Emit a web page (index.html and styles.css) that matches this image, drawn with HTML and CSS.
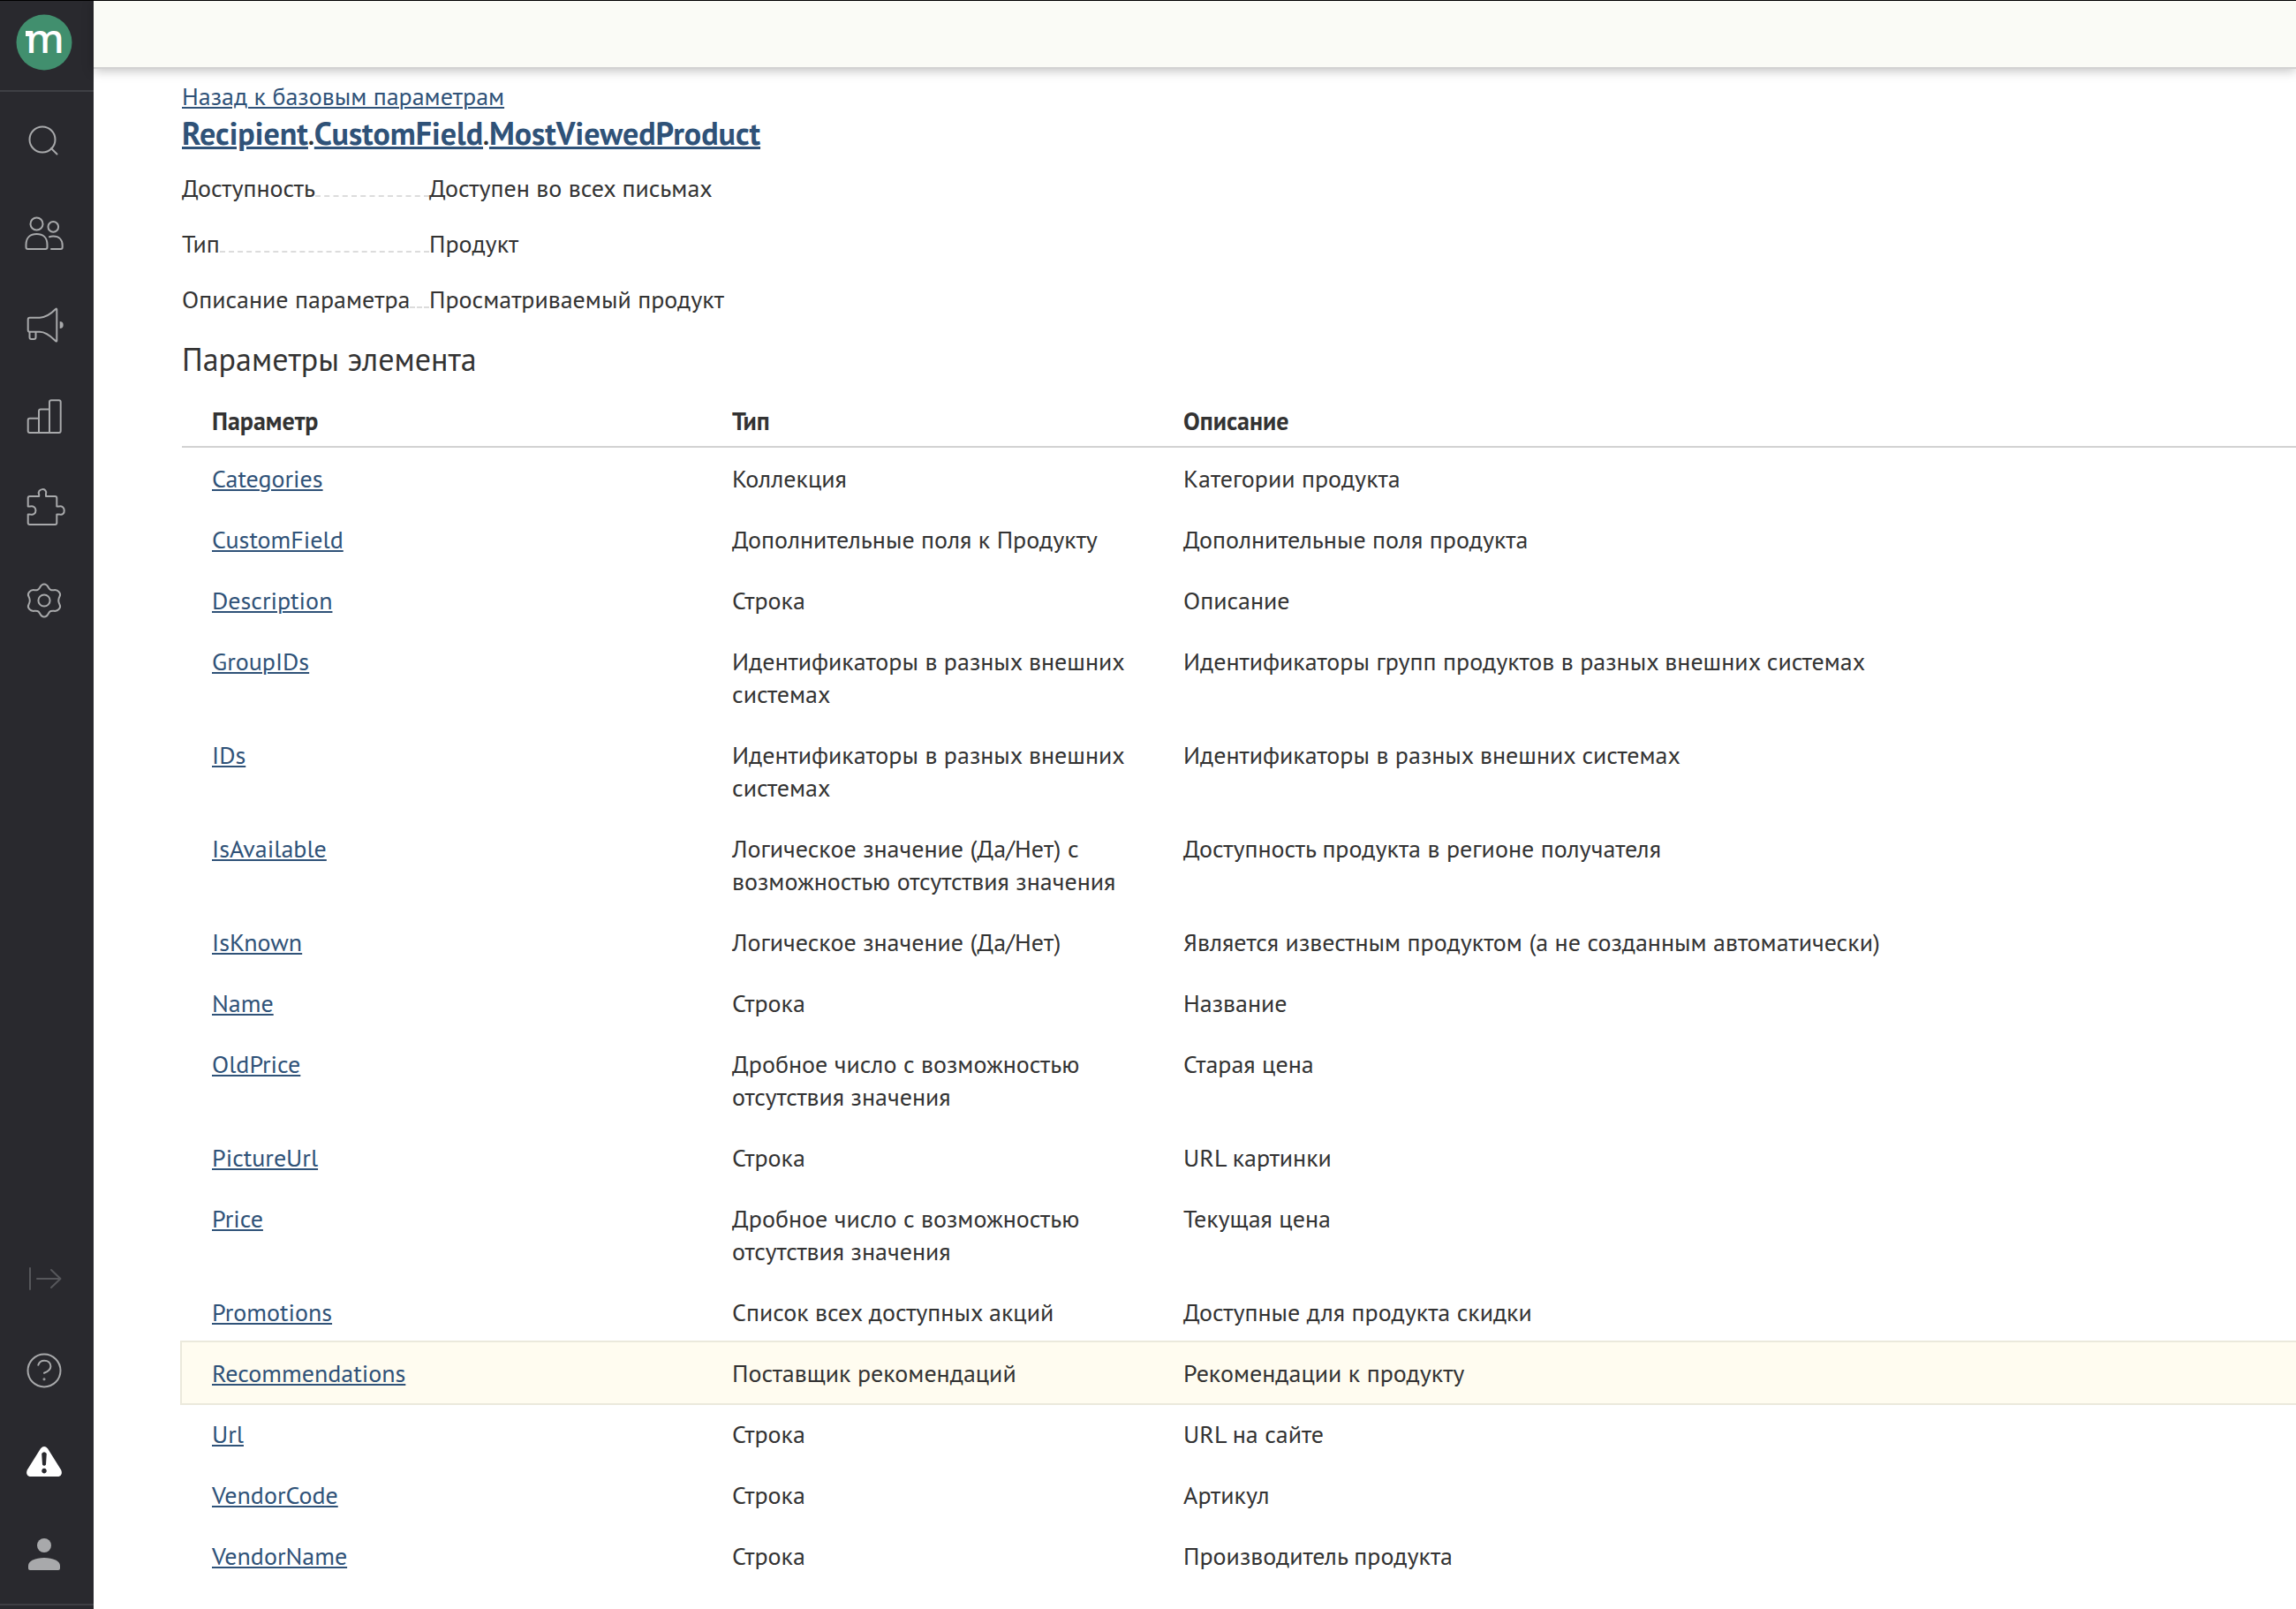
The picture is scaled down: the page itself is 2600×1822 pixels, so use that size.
FILE: index.html
```html
<!DOCTYPE html>
<html lang="ru">
<head>
<meta charset="utf-8">
<meta name="viewport" content="width=device-width, initial-scale=1">
<title>Recipient.CustomField.MostViewedProduct</title>
<link rel="stylesheet" href="styles.css">
</head>
<body>
<div class="app">
  <aside class="sidebar">
    <a class="logo" href="#" aria-label="Главная">
      <svg class="logo-mark" viewBox="0 0 64 64" aria-hidden="true">
        <circle class="logo-disc" cx="32" cy="32" r="31.5"/>
        <rect class="logo-letter" x="11" y="19" width="6" height="6"/>
        <text class="logo-letter logo-text" x="33" y="44" text-anchor="middle">m</text>
      </svg>
    </a>
    <nav class="menu" aria-label="Основное меню">
      <button class="menu-item" type="button" aria-label="Поиск">
        <svg class="icon" viewBox="0 0 48 48"><circle cx="22" cy="22" r="14.5"/><path d="M32 32l6.500 6.500"/></svg>
      </button>
      <button class="menu-item" type="button" aria-label="Клиенты">
        <svg class="icon" viewBox="0 0 48 48"><circle cx="15.500" cy="13.500" r="7"/><circle cx="34.300" cy="16.900" r="5.800"/><path d="M3.500 40v-3c0-8 5-12 12-12s12 4 12 12v3q0 2-2 2h-20q-2 0-2-2z"/><path d="M30 28.200c1-.4 2.600-.6 4.300-.6 6.700 0 10.400 4 10.400 10.400v2q0 2-2 2H32"/></svg>
      </button>
      <button class="menu-item" type="button" aria-label="Кампании">
        <svg class="icon" viewBox="0 0 48 48"><path d="M7.700 15.700H19c8 0 14-5.700 18-9.700q1.300-1 1.300.500v35.200q0 1.500-1.300.500c-4-4-10-10.500-18-10.500H7.700q-2 0-2-2v-12q0-2 2-2z"/><path d="M7.500 32v6q0 2 2 2h3q2 0 2-2v-6"/><path class="solid" d="M41.700 20a4 4 0 0 1 0 8z"/></svg>
      </button>
      <button class="menu-item" type="button" aria-label="Отчёты">
        <svg class="icon" viewBox="0 0 48 48"><path d="M18 25.700H7.700q-2 0-2 2V40q0 2 2 2h33q2 0 2-2V7.300q0-2-2-2H32q-2 0-2 2V42M30 15.500H20q-2 0-2 2V42"/></svg>
      </button>
      <button class="menu-item" type="button" aria-label="Интеграции">
        <svg class="icon" viewBox="0 0 48 48"><path d="M5.700 21.500V12q0-2 2-2h10.500V8c-3-7 10-8.500 7.800-.5V10h10.300q2 0 2 2v9.500h2.200c8-2.500 8.500 11.500.5 8.900h-2.700V40q0 2-2 2H7.700q-2 0-2-2v-9.600h2c9 2.600 9-11.400 0-8.900z"/></svg>
      </button>
      <button class="menu-item" type="button" aria-label="Настройки">
        <svg class="icon" viewBox="0 0 48 48"><circle cx="24" cy="24" r="6.600"/><path d="M24 5.500C27 5.500 28 7.500 29 9.500 30.500 12.300 32 12.300 35 12.200 40 11.500 43.500 16 41.500 19.500 39.500 23 39.500 25 41.500 28.500 43.500 32 40 36.500 35 35.800 32 35.700 30.500 35.700 29 38.500 28 40.500 27 42.500 24 42.500S20 40.500 19 38.500C17.500 35.700 16 35.700 13 35.800 8 36.500 4.500 32 6.500 28.500 8.500 25 8.500 23 6.500 19.500 4.500 16 8 11.500 13 12.200 16 12.300 17.500 12.300 19 9.500 20 7.500 21 5.500 24 5.500z"/></svg>
      </button>
    </nav>
    <div class="menu menu-bottom">
      <button class="menu-item menu-item-dim" type="button" aria-label="Развернуть меню">
        <svg class="icon" viewBox="0 0 48 48"><path d="M8 12v24M16 24h26M32 14l10.500 10L32 34"/></svg>
      </button>
      <button class="menu-item" type="button" aria-label="Помощь">
        <svg class="icon" viewBox="0 0 48 48"><circle cx="24" cy="24" r="18.500"/><path d="M17.300 17.700c1-3.300 3.700-5 6.900-5 4.200 0 7.200 2.700 7.200 6.600 0 4.300-3.400 5.900-7.400 7.500"/><circle class="solid" cx="24" cy="33.800" r=".5"/></svg>
      </button>
      <button class="menu-item menu-item-alert" type="button" aria-label="Предупреждения">
        <svg class="icon icon-filled" viewBox="0 0 48 48"><path fill-rule="evenodd" d="M20 8.200q4-4.400 8 0l15.300 24.500q2.200 5.500-2.800 7.300h-33q-5-1.800-2.800-7.300zM21.200 14l.8 12.500q2 2.600 4 0l.8-12.500q-2.800-3.600-5.600 0zM24 30.800a2.800 2.800 0 1 0 .01 0z"/></svg>
      </button>
      <button class="menu-item" type="button" aria-label="Профиль">
        <svg class="icon icon-filled" viewBox="0 0 48 48"><circle cx="24" cy="14" r="8"/><path d="M6 37c0-5.500 8-9 18-9s18 3.500 18 9v3q0 2-2 2H8q-2 0-2-2z"/></svg>
      </button>
    </div>
  </aside>

  <div class="page">
    <header class="topbar"></header>
    <main class="content">
      <a class="link back" href="#">Назад к базовым параметрам</a>
      <h1 class="title"><a class="link" href="#">Recipient</a><span class="dot">.</span><a class="link" href="#">CustomField</a><span class="dot">.</span><a class="link" href="#">MostViewedProduct</a></h1>
      <dl class="facts">
        <div class="fact"><dt class="fact-name">Доступность</dt><dd class="fact-value">Доступен во всех письмах</dd></div>
        <div class="fact"><dt class="fact-name">Тип</dt><dd class="fact-value">Продукт</dd></div>
        <div class="fact"><dt class="fact-name">Описание параметра</dt><dd class="fact-value">Просматриваемый продукт</dd></div>
      </dl>
      <h2 class="subtitle">Параметры элемента</h2>
      <table class="params">
        <colgroup><col class="col-name"><col class="col-type"><col></colgroup>
        <thead>
          <tr><th scope="col">Параметр</th><th scope="col">Тип</th><th scope="col">Описание</th></tr>
        </thead>
        <tbody>
          <tr><td><a class="link" href="#">Categories</a></td><td>Коллекция</td><td>Категории продукта</td></tr>
          <tr><td><a class="link" href="#">CustomField</a></td><td>Дополнительные поля к Продукту</td><td>Дополнительные поля продукта</td></tr>
          <tr><td><a class="link" href="#">Description</a></td><td>Строка</td><td>Описание</td></tr>
          <tr><td><a class="link" href="#">GroupIDs</a></td><td>Идентификаторы в разных внешних системах</td><td>Идентификаторы групп продуктов в разных внешних системах</td></tr>
          <tr><td><a class="link" href="#">IDs</a></td><td>Идентификаторы в разных внешних системах</td><td>Идентификаторы в разных внешних системах</td></tr>
          <tr><td><a class="link" href="#">IsAvailable</a></td><td>Логическое значение (Да/Нет) с возможностью отсутствия значения</td><td>Доступность продукта в регионе получателя</td></tr>
          <tr><td><a class="link" href="#">IsKnown</a></td><td>Логическое значение (Да/Нет)</td><td>Является известным продуктом (а не созданным автоматически)</td></tr>
          <tr><td><a class="link" href="#">Name</a></td><td>Строка</td><td>Название</td></tr>
          <tr><td><a class="link" href="#">OldPrice</a></td><td>Дробное число с возможностью отсутствия значения</td><td>Старая цена</td></tr>
          <tr><td><a class="link" href="#">PictureUrl</a></td><td>Строка</td><td>URL картинки</td></tr>
          <tr><td><a class="link" href="#">Price</a></td><td>Дробное число с возможностью отсутствия значения</td><td>Текущая цена</td></tr>
          <tr><td><a class="link" href="#">Promotions</a></td><td>Список всех доступных акций</td><td>Доступные для продукта скидки</td></tr>
          <tr class="is-active"><td><a class="link" href="#">Recommendations</a></td><td>Поставщик рекомендаций</td><td>Рекомендации к продукту</td></tr>
          <tr><td><a class="link" href="#">Url</a></td><td>Строка</td><td>URL на сайте</td></tr>
          <tr><td><a class="link" href="#">VendorCode</a></td><td>Строка</td><td>Артикул</td></tr>
          <tr><td><a class="link" href="#">VendorName</a></td><td>Строка</td><td>Производитель продукта</td></tr>
        </tbody>
      </table>
    </main>
  </div>
</div>
</body>
</html>
```
FILE: styles.css
```css
* { box-sizing: border-box; }

body {
  margin: 0;
  background: #fff;
  color: #333;
  font-family: "PT Sans", "Noto Sans", sans-serif;
  font-size: 28px;
  line-height: 37px;
}

.app {
  display: flex;
  min-height: 100vh;
  border-top: 1px solid #000;
}

/* Sidebar */
.sidebar {
  flex: none;
  display: flex;
  flex-direction: column;
  width: 106px;
  padding-bottom: 4px;
  background: #29292e;
}

.logo {
  display: flex;
  justify-content: center;
  height: 103px;
  padding: 15px 6px 0 0;
  border-bottom: 2px solid #3e3f44;
}

.logo-mark { width: 64px; height: 64px; overflow: visible; }
.logo-disc { fill: #418f6e; }
.logo-letter { fill: #fff; }

.logo-text {
  font-family: "Noto Sans", sans-serif;
  font-size: 46px;
  font-weight: 500;
}

.menu {
  display: flex;
  flex-direction: column;
  padding-top: 4px;
}

.menu-bottom {
  margin-top: auto;
  padding-bottom: 4px;
  border-bottom: 2px solid #3e3f44;
}

.menu-item {
  display: flex;
  align-items: center;
  justify-content: center;
  height: 104px;
  padding: 0 6px 0 0;
  border: 0;
  background: none;
  color: #a8a9ab;
  cursor: pointer;
}

.menu-item-dim { color: #56575b; }
.menu-item-alert { color: #fff; }

.icon {
  width: 48px;
  height: 48px;
  fill: none;
  stroke: currentColor;
  stroke-width: 2;
  stroke-linecap: round;
  stroke-linejoin: round;
}

.icon-filled { fill: currentColor; stroke: none; }
.solid { fill: currentColor; }
.icon path.solid { stroke: none; }

/* Page */
.page { flex: 1; min-width: 0; }

.topbar {
  height: 77px;
  background: #fafbf6;
  border-bottom: 2px solid #d2d2d2;
  box-shadow: 0 2px 12px rgba(0, 0, 0, 0.25);
}

.content { padding: 12px 0 16px 100px; }

.link {
  color: #2f5278;
  text-decoration-line: underline;
  text-decoration-thickness: 2px;
  text-underline-offset: 2px;
}

.back { display: block; width: fit-content; }

.title {
  margin: 0;
  font-size: 36px;
  line-height: 48px;
}

.title .link { text-decoration-thickness: 3px; }
.dot { font-size: 28px; line-height: 1; }

.facts { margin: 6px 0 0; }

.fact {
  display: flex;
  align-items: baseline;
  padding: 13px 0;
}

.fact-name {
  display: flex;
  align-items: baseline;
  flex: none;
  width: 280px;
  white-space: nowrap;
}

.fact-name::after {
  content: "";
  flex: 1;
  height: 2px;
  border-bottom: 2px dashed #dcdcdc;
}

.fact-value { margin: 0; }

.subtitle {
  margin: 13px 0 0;
  font-size: 36px;
  font-weight: 400;
  line-height: 48px;
}

/* Parameter table */
.params {
  width: 100%;
  margin-top: 27px;
  table-layout: fixed;
  border-spacing: 0;
}

.col-name { width: 589px; }
.col-type { width: 511px; }

.params th,
.params td {
  padding: 16px 24px 16px 34px;
  text-align: left;
  vertical-align: top;
}

.params th {
  padding-top: 0;
  padding-bottom: 10px;
  border-bottom: 2px solid #d2d2d2;
}

.params .is-active {
  background: #fffcf0;
  outline: 2px solid #ebe9dc;
}
```
